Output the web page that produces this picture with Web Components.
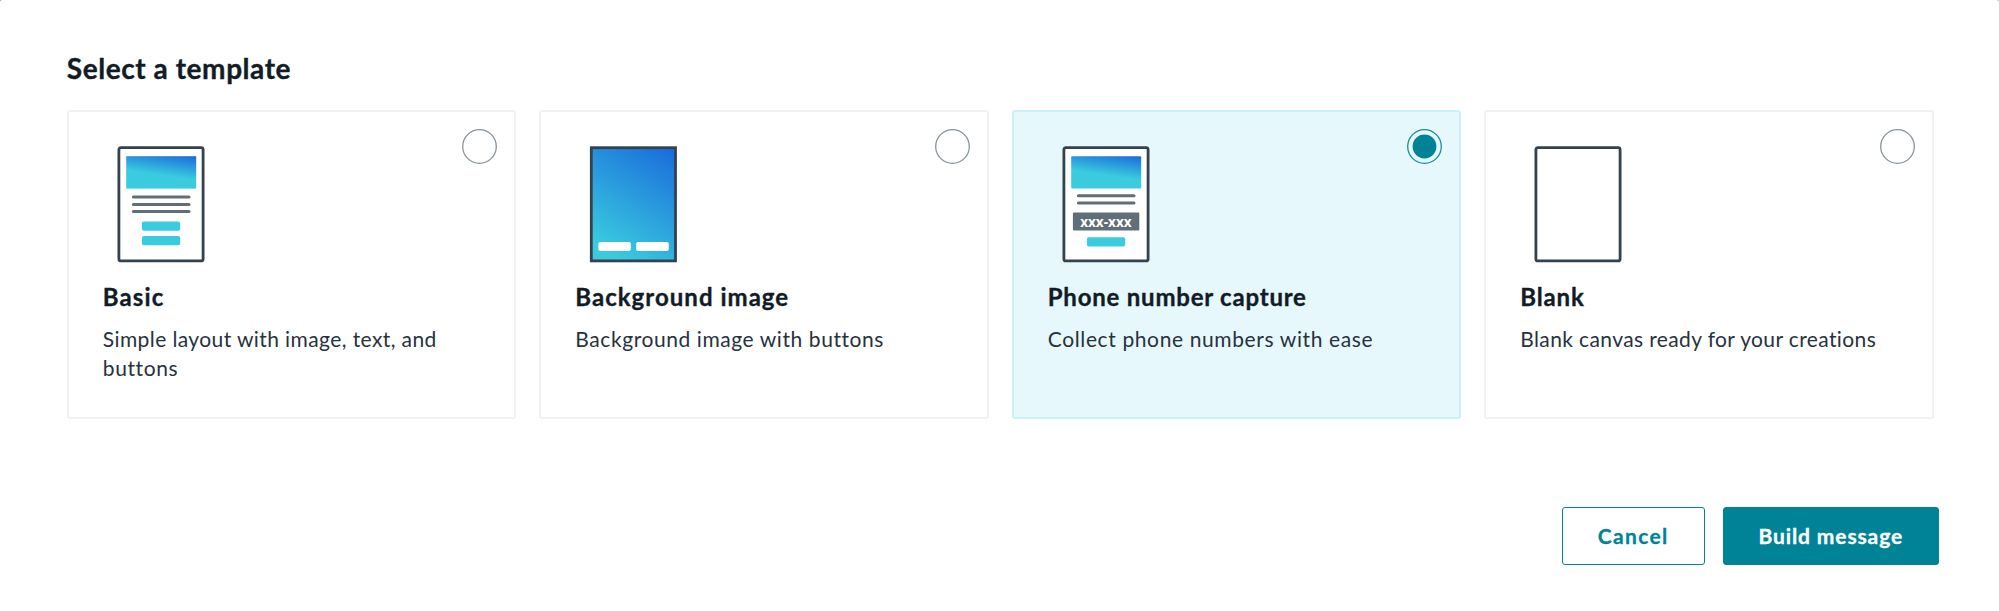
<!DOCTYPE html>
<html lang="en">
<head>
<meta charset="utf-8">
<title>Select a template</title>
<style>
html{background:#8b9095}
body{margin:0;font-family:Lato,"Open Sans",sans-serif;color:#121c27;overflow:hidden}
</style>
</head>
<body>
<template-dialog>
  <span slot="title">Select a template</span>
  <template-card kind="basic" style="--hs:1.1px;--ds:.4px"><span slot="name">Basic</span>Simple layout with image, text, and <span style="letter-spacing:.6px">buttons</span></template-card>
  <template-card kind="background" style="--hs:1.03px;--ds:.577px"><span slot="name">Background image</span>Background image with buttons</template-card>
  <template-card kind="phone" selected style="--hs:.78px;--ds:.62px"><span slot="name">Phone number capture</span>Collect phone numbers with ease</template-card>
  <template-card kind="blank" style="--hs:.85px;--ds:.38px"><span slot="name">Blank</span>Blank canvas ready for your creations</template-card>
  <action-button slot="actions" style="--w:143.4px;--ls:1.35px">Cancel</action-button>
  <action-button slot="actions" primary style="--w:216.5px;--ls:.886px">Build message</action-button>
</template-dialog>
<script>
const attach = (el, html) => { el.attachShadow({mode:'open'}).innerHTML = html; };

customElements.define('template-dialog', class extends HTMLElement {
  connectedCallback() {
    attach(this, `<style>
:host{display:block;box-sizing:border-box;width:1999px;height:611px;padding:51px 60px 0 66.8px;background:#fff;border-radius:2px 2px 0 0}
h1{margin:0;font-size:28px;line-height:34px;font-weight:700;letter-spacing:.56px;-webkit-text-stroke:.35px currentColor}
.cards{display:grid;grid-template-columns:repeat(4,449.4px);gap:23.1px;height:308.5px;margin-top:25px}
.actions{display:flex;justify-content:flex-end;gap:17.6px;margin-top:88.5px}
</style>
<h1><slot name="title"></slot></h1>
<div class="cards"><slot></slot></div>
<div class="actions"><slot name="actions"></slot></div>`);
  }
});

customElements.define('template-card', class extends HTMLElement {
  connectedCallback() {
    attach(this, `<style>
:host{display:block;box-sizing:border-box;border:2px solid #eff2f2;border-radius:3px;padding:34px 34px 0;background:#fff}
:host([selected]){background:#e6f8fc;border-color:#c9f2f8}
.top{display:flex;justify-content:space-between;height:117px}
radio-mark{margin:-17px -17.2px 0 0}
h2{margin:19px 0 12px;font-size:24px;line-height:30px;font-weight:700;letter-spacing:var(--hs);-webkit-text-stroke:.35px currentColor}
p{margin:0;font-size:21px;line-height:29px;letter-spacing:var(--ds);color:#26323e}
</style>
<div class="top"><template-icon kind="${this.getAttribute('kind')}"></template-icon><radio-mark ${this.hasAttribute('selected') ? 'checked' : ''}></radio-mark></div>
<h2><slot name="name"></slot></h2>
<p><slot></slot></p>`);
  }
});

customElements.define('radio-mark', class extends HTMLElement {
  connectedCallback() {
    const on = this.hasAttribute('checked');
    attach(this, `<style>:host{display:block;width:35px;height:35px}svg{display:block}</style>
<svg width="35" height="35"><circle cx="17.5" cy="17.5" r="16.8" fill="none" stroke="${on ? '#1a8d9e' : '#87949b'}" stroke-width="1.3"/>${on ? '<circle cx="17.5" cy="17.5" r="11.9" fill="#008396"/>' : ''}</svg>`);
  }
});

customElements.define('template-icon', class extends HTMLElement {
  connectedCallback() {
    const bar = (x, y, w, h, fill, r) => `<rect x="${x}" y="${y}" width="${w}" height="${h}" rx="${r}" fill="${fill}"/>`;
    const cyan = '#3acbdf', grey = '#606e78';
    const page = '<rect x="15.9" y="1.7" width="84.2" height="113.2" rx="2" fill="#fff" stroke="#33424e" stroke-width="2.8"/>';
    const banner = r => bar(23.2, 10.2, 70, 32.4, 'url(#g)', r);
    const line = y => bar(28.9, y - 1.5, 58.6, 3, grey, 1.5);
    const art = {
      basic: page + banner(0) + line(51) + line(58.5) + line(65.6) + bar(38.9, 75.4, 38.3, 9.4, cyan, 2) + bar(38.9, 90, 38.3, 9.2, cyan, 2),
      background: '<rect x="16.3" y="1.7" width="84.2" height="113.2" fill="url(#b)" stroke="#33424e" stroke-width="2.8"/>' + bar(23.4, 96, 32.4, 9, '#fff', 2) + bar(61.1, 96, 32.7, 9, '#fff', 2),
      phone: page + banner(1) + line(49.7) + line(57) + bar(24.9, 66.6, 66.4, 18, grey, 1) + '<text x="32.2" y="80.5" textLength="51.4" lengthAdjust="spacingAndGlyphs" fill="#fff" font-family="Open Sans" font-weight="700" font-size="15">xxx-xxx</text>' + bar(38.9, 91.3, 38.3, 9.3, cyan, 2),
      blank: page
    };
    attach(this, `<style>:host{display:block}svg{display:block}</style>
<svg width="104" height="117"><defs>
<linearGradient id="g" gradientUnits="userSpaceOnUse" x1="93" y1="10" x2="89.6" y2="33.5"><stop stop-color="#196bdb"/><stop offset="1" stop-color="${cyan}"/></linearGradient>
<linearGradient id="b" gradientUnits="userSpaceOnUse" x1="100" y1="2" x2="33" y2="106"><stop stop-color="#196bdb"/><stop offset="1" stop-color="${cyan}"/></linearGradient>
</defs>${art[this.getAttribute('kind')]}</svg>`);
  }
});

customElements.define('action-button', class extends HTMLElement {
  connectedCallback() {
    attach(this, `<style>
:host{display:block;width:var(--w)}
button{display:block;box-sizing:border-box;width:100%;height:58px;padding:0;border:1px solid #008396;border-radius:3px;background:#fff;color:#008396;font:700 21px/28px Lato,sans-serif;letter-spacing:var(--ls);-webkit-text-stroke:.3px currentColor}
:host([primary]) button{background:#008396;color:#fff}
</style><button><slot></slot></button>`);
  }
});
</script>
</body>
</html>
